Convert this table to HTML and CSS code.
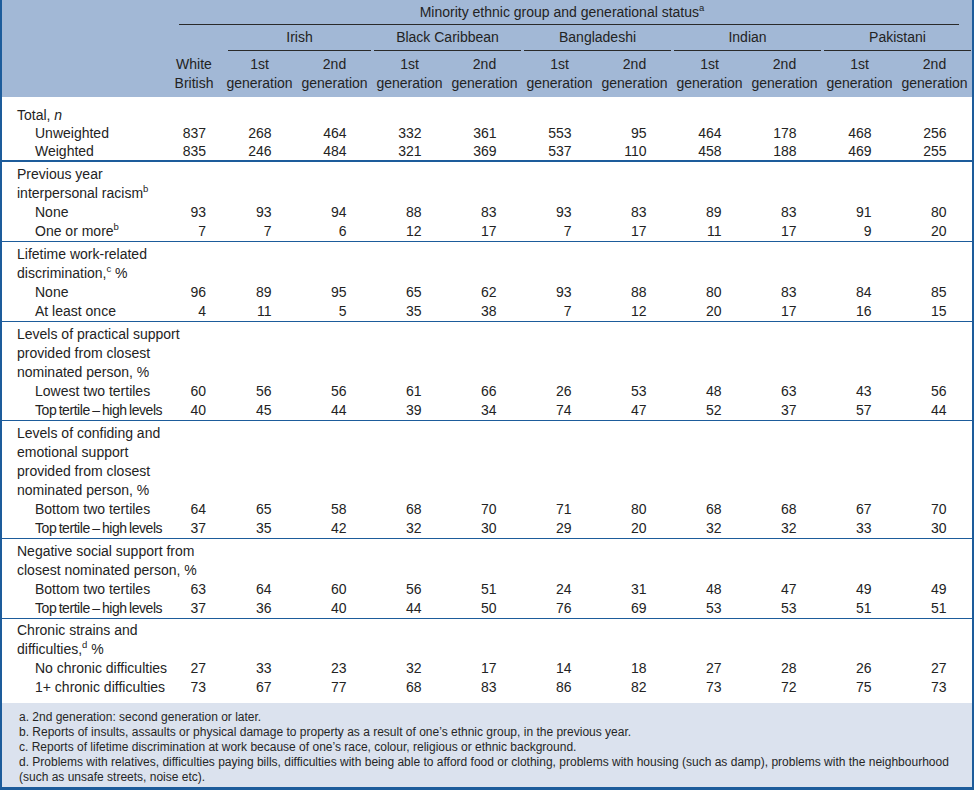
FILE: index.html
```
<!DOCTYPE html>
<html lang="en">
<head>
<meta charset="utf-8">
<title>Table</title>
<link rel="stylesheet" href="styles.css">
</head>
<body>
<div class="frame">
<table class="data">
<colgroup>
<col class="c-label"><col class="c-wb">
<col class="c-gen"><col class="c-gen"><col class="c-gen"><col class="c-gen"><col class="c-gen">
<col class="c-gen"><col class="c-gen"><col class="c-gen"><col class="c-gen"><col class="c-gen">
</colgroup>
<thead>
<tr class="h1">
<th></th>
<th colspan="11"><div class="spanner">Minority ethnic group and generational status<sup>a</sup></div></th>
</tr>
<tr class="h2">
<th></th><th></th>
<th colspan="2"><div class="grp grp-first">Irish</div></th>
<th colspan="2"><div class="grp">Black Caribbean</div></th>
<th colspan="2"><div class="grp">Bangladeshi</div></th>
<th colspan="2"><div class="grp">Indian</div></th>
<th colspan="2"><div class="grp grp-last">Pakistani</div></th>
</tr>
<tr class="h3">
<th></th>
<th>White<br>British</th>
<th>1st<br>generation</th><th>2nd<br>generation</th>
<th>1st<br>generation</th><th>2nd<br>generation</th>
<th>1st<br>generation</th><th>2nd<br>generation</th>
<th>1st<br>generation</th><th>2nd<br>generation</th>
<th>1st<br>generation</th><th>2nd<br>generation</th>
</tr>
</thead>
<tbody class="sec sec-first">
<tr class="first"><td class="lab" colspan="12">Total, <i>n</i></td></tr>
<tr><td class="sub">Unweighted</td><td><span>837</span></td><td><span>268</span></td><td><span>464</span></td><td><span>332</span></td><td><span>361</span></td><td><span>553</span></td><td><span>95</span></td><td><span>464</span></td><td><span>178</span></td><td><span>468</span></td><td><span>256</span></td></tr>
<tr><td class="sub">Weighted</td><td><span>835</span></td><td><span>246</span></td><td><span>484</span></td><td><span>321</span></td><td><span>369</span></td><td><span>537</span></td><td><span>110</span></td><td><span>458</span></td><td><span>188</span></td><td><span>469</span></td><td><span>255</span></td></tr>
</tbody>
<tbody class="sec">
<tr class="first"><td class="lab" colspan="12">Previous year</td></tr>
<tr><td class="lab" colspan="12">interpersonal racism<sup>b</sup></td></tr>
<tr><td class="sub">None</td><td><span>93</span></td><td><span>93</span></td><td><span>94</span></td><td><span>88</span></td><td><span>83</span></td><td><span>93</span></td><td><span>83</span></td><td><span>89</span></td><td><span>83</span></td><td><span>91</span></td><td><span>80</span></td></tr>
<tr><td class="sub">One or more<sup>b</sup></td><td><span>7</span></td><td><span>7</span></td><td><span>6</span></td><td><span>12</span></td><td><span>17</span></td><td><span>7</span></td><td><span>17</span></td><td><span>11</span></td><td><span>17</span></td><td><span>9</span></td><td><span>20</span></td></tr>
</tbody>
<tbody class="sec">
<tr class="first"><td class="lab" colspan="12">Lifetime work-related</td></tr>
<tr><td class="lab" colspan="12">discrimination,<sup>c</sup> %</td></tr>
<tr><td class="sub">None</td><td><span>96</span></td><td><span>89</span></td><td><span>95</span></td><td><span>65</span></td><td><span>62</span></td><td><span>93</span></td><td><span>88</span></td><td><span>80</span></td><td><span>83</span></td><td><span>84</span></td><td><span>85</span></td></tr>
<tr><td class="sub">At least once</td><td><span>4</span></td><td><span>11</span></td><td><span>5</span></td><td><span>35</span></td><td><span>38</span></td><td><span>7</span></td><td><span>12</span></td><td><span>20</span></td><td><span>17</span></td><td><span>16</span></td><td><span>15</span></td></tr>
</tbody>
<tbody class="sec">
<tr class="first"><td class="lab" colspan="12">Levels of practical support</td></tr>
<tr><td class="lab" colspan="12">provided from closest</td></tr>
<tr><td class="lab" colspan="12">nominated person, %</td></tr>
<tr><td class="sub">Lowest two tertiles</td><td><span>60</span></td><td><span>56</span></td><td><span>56</span></td><td><span>61</span></td><td><span>66</span></td><td><span>26</span></td><td><span>53</span></td><td><span>48</span></td><td><span>63</span></td><td><span>43</span></td><td><span>56</span></td></tr>
<tr><td class="sub tight">Top tertile – high levels</td><td><span>40</span></td><td><span>45</span></td><td><span>44</span></td><td><span>39</span></td><td><span>34</span></td><td><span>74</span></td><td><span>47</span></td><td><span>52</span></td><td><span>37</span></td><td><span>57</span></td><td><span>44</span></td></tr>
</tbody>
<tbody class="sec">
<tr class="first"><td class="lab" colspan="12">Levels of confiding and</td></tr>
<tr><td class="lab" colspan="12">emotional support</td></tr>
<tr><td class="lab" colspan="12">provided from closest</td></tr>
<tr><td class="lab" colspan="12">nominated person, %</td></tr>
<tr><td class="sub">Bottom two tertiles</td><td><span>64</span></td><td><span>65</span></td><td><span>58</span></td><td><span>68</span></td><td><span>70</span></td><td><span>71</span></td><td><span>80</span></td><td><span>68</span></td><td><span>68</span></td><td><span>67</span></td><td><span>70</span></td></tr>
<tr><td class="sub tight">Top tertile – high levels</td><td><span>37</span></td><td><span>35</span></td><td><span>42</span></td><td><span>32</span></td><td><span>30</span></td><td><span>29</span></td><td><span>20</span></td><td><span>32</span></td><td><span>32</span></td><td><span>33</span></td><td><span>30</span></td></tr>
</tbody>
<tbody class="sec">
<tr class="first"><td class="lab" colspan="12">Negative social support from</td></tr>
<tr><td class="lab" colspan="12">closest nominated person, %</td></tr>
<tr><td class="sub">Bottom two tertiles</td><td><span>63</span></td><td><span>64</span></td><td><span>60</span></td><td><span>56</span></td><td><span>51</span></td><td><span>24</span></td><td><span>31</span></td><td><span>48</span></td><td><span>47</span></td><td><span>49</span></td><td><span>49</span></td></tr>
<tr><td class="sub tight">Top tertile – high levels</td><td><span>37</span></td><td><span>36</span></td><td><span>40</span></td><td><span>44</span></td><td><span>50</span></td><td><span>76</span></td><td><span>69</span></td><td><span>53</span></td><td><span>53</span></td><td><span>51</span></td><td><span>51</span></td></tr>
</tbody>
<tbody class="sec sec-last">
<tr class="first"><td class="lab" colspan="12">Chronic strains and</td></tr>
<tr><td class="lab" colspan="12">difficulties,<sup>d</sup> %</td></tr>
<tr><td class="sub">No chronic difficulties</td><td><span>27</span></td><td><span>33</span></td><td><span>23</span></td><td><span>32</span></td><td><span>17</span></td><td><span>14</span></td><td><span>18</span></td><td><span>27</span></td><td><span>28</span></td><td><span>26</span></td><td><span>27</span></td></tr>
<tr><td class="sub">1+ chronic difficulties</td><td><span>73</span></td><td><span>67</span></td><td><span>77</span></td><td><span>68</span></td><td><span>83</span></td><td><span>86</span></td><td><span>82</span></td><td><span>73</span></td><td><span>72</span></td><td><span>75</span></td><td><span>73</span></td></tr>
</tbody>
</table>
<div class="notes">
<p>a. 2nd generation: second generation or later.</p>
<p>b. Reports of insults, assaults or physical damage to property as a result of one’s ethnic group, in the previous year.</p>
<p>c. Reports of lifetime discrimination at work because of one’s race, colour, religious or ethnic background.</p>
<p><span class="nowrap">d. Problems with relatives, difficulties paying bills, difficulties with being able to afford food or clothing, problems with housing (such as damp), problems with the neighbourhood</span><br>(such as unsafe streets, noise etc).</p>
</div>
</div>
</body>
</html>
```

FILE: styles.css
```
* { box-sizing: border-box; }
html, body { margin: 0; padding: 0; background: #ffffff; }
body {
  font-family: "Liberation Sans", Arial, sans-serif;
  font-size: 14px;
  color: #232323;
}
.frame {
  width: 974px;
  border-left: 2px solid #1d5c9b;
  border-right: 2px solid #1d5c9b;
  border-bottom: 3px solid #1d5c9b;
}
table.data {
  width: 970px;
  border-collapse: collapse;
  table-layout: fixed;
}
col.c-label { width: 164px; }
col.c-wb { width: 56px; }
col.c-gen { width: 75px; }
th, td { padding: 0; font-weight: normal; white-space: nowrap; }
thead { background: #a2b8d6; }
thead th { text-align: center; }
sup { font-size: 9.5px; line-height: 0; vertical-align: 6px; }

.h1 th { height: 25px; vertical-align: top; }
.spanner {
  margin: 0 13px;
  height: 25px;
  line-height: 24px;
  padding-right: 14px;
  border-bottom: 1px solid #2a2a2a;
}
.h2 th { height: 26px; vertical-align: top; }
.grp {
  margin: 0 1px 0 2px;
  height: 26px;
  line-height: 25px;
  border-bottom: 1px solid #2a2a2a;
}
.grp-first { margin-left: 6px; }
.grp-last { margin-right: 1px; }
.h3 th { line-height: 19px; padding: 4px 0 4px; }

tbody td { line-height: 19px; text-align: center; }
tbody td span { display: inline-block; width: 24px; text-align: right; }
tbody td.lab { text-align: left; padding-left: 15px; }
tbody td.sub { text-align: left; padding-left: 33px; }
.tight { letter-spacing: -0.45px; word-spacing: -1px; }
tbody.sec { border-bottom: 1px solid #1d5c9b; }
tbody.sec-first { border-bottom: 2px solid #1d5c9b; }
tbody.sec-last { border-bottom: none; }
tbody.sec tr.first td { padding-top: 3px; }
tbody.sec-first tr.first td { padding-top: 9px; }
tbody.sec-first td { line-height: 18px; }
tbody.sec-last tr.first td { padding-top: 2px; }
tbody.sec-last tr:last-child td { padding-bottom: 6px; }

.notes {
  background: #dbe2ee;
  padding: 7px 10px 2px 17px;
  font-size: 12px;
  line-height: 15px;
  color: #262626;
}
.notes p { margin: 0; }
.notes .nowrap { white-space: nowrap; }
```
